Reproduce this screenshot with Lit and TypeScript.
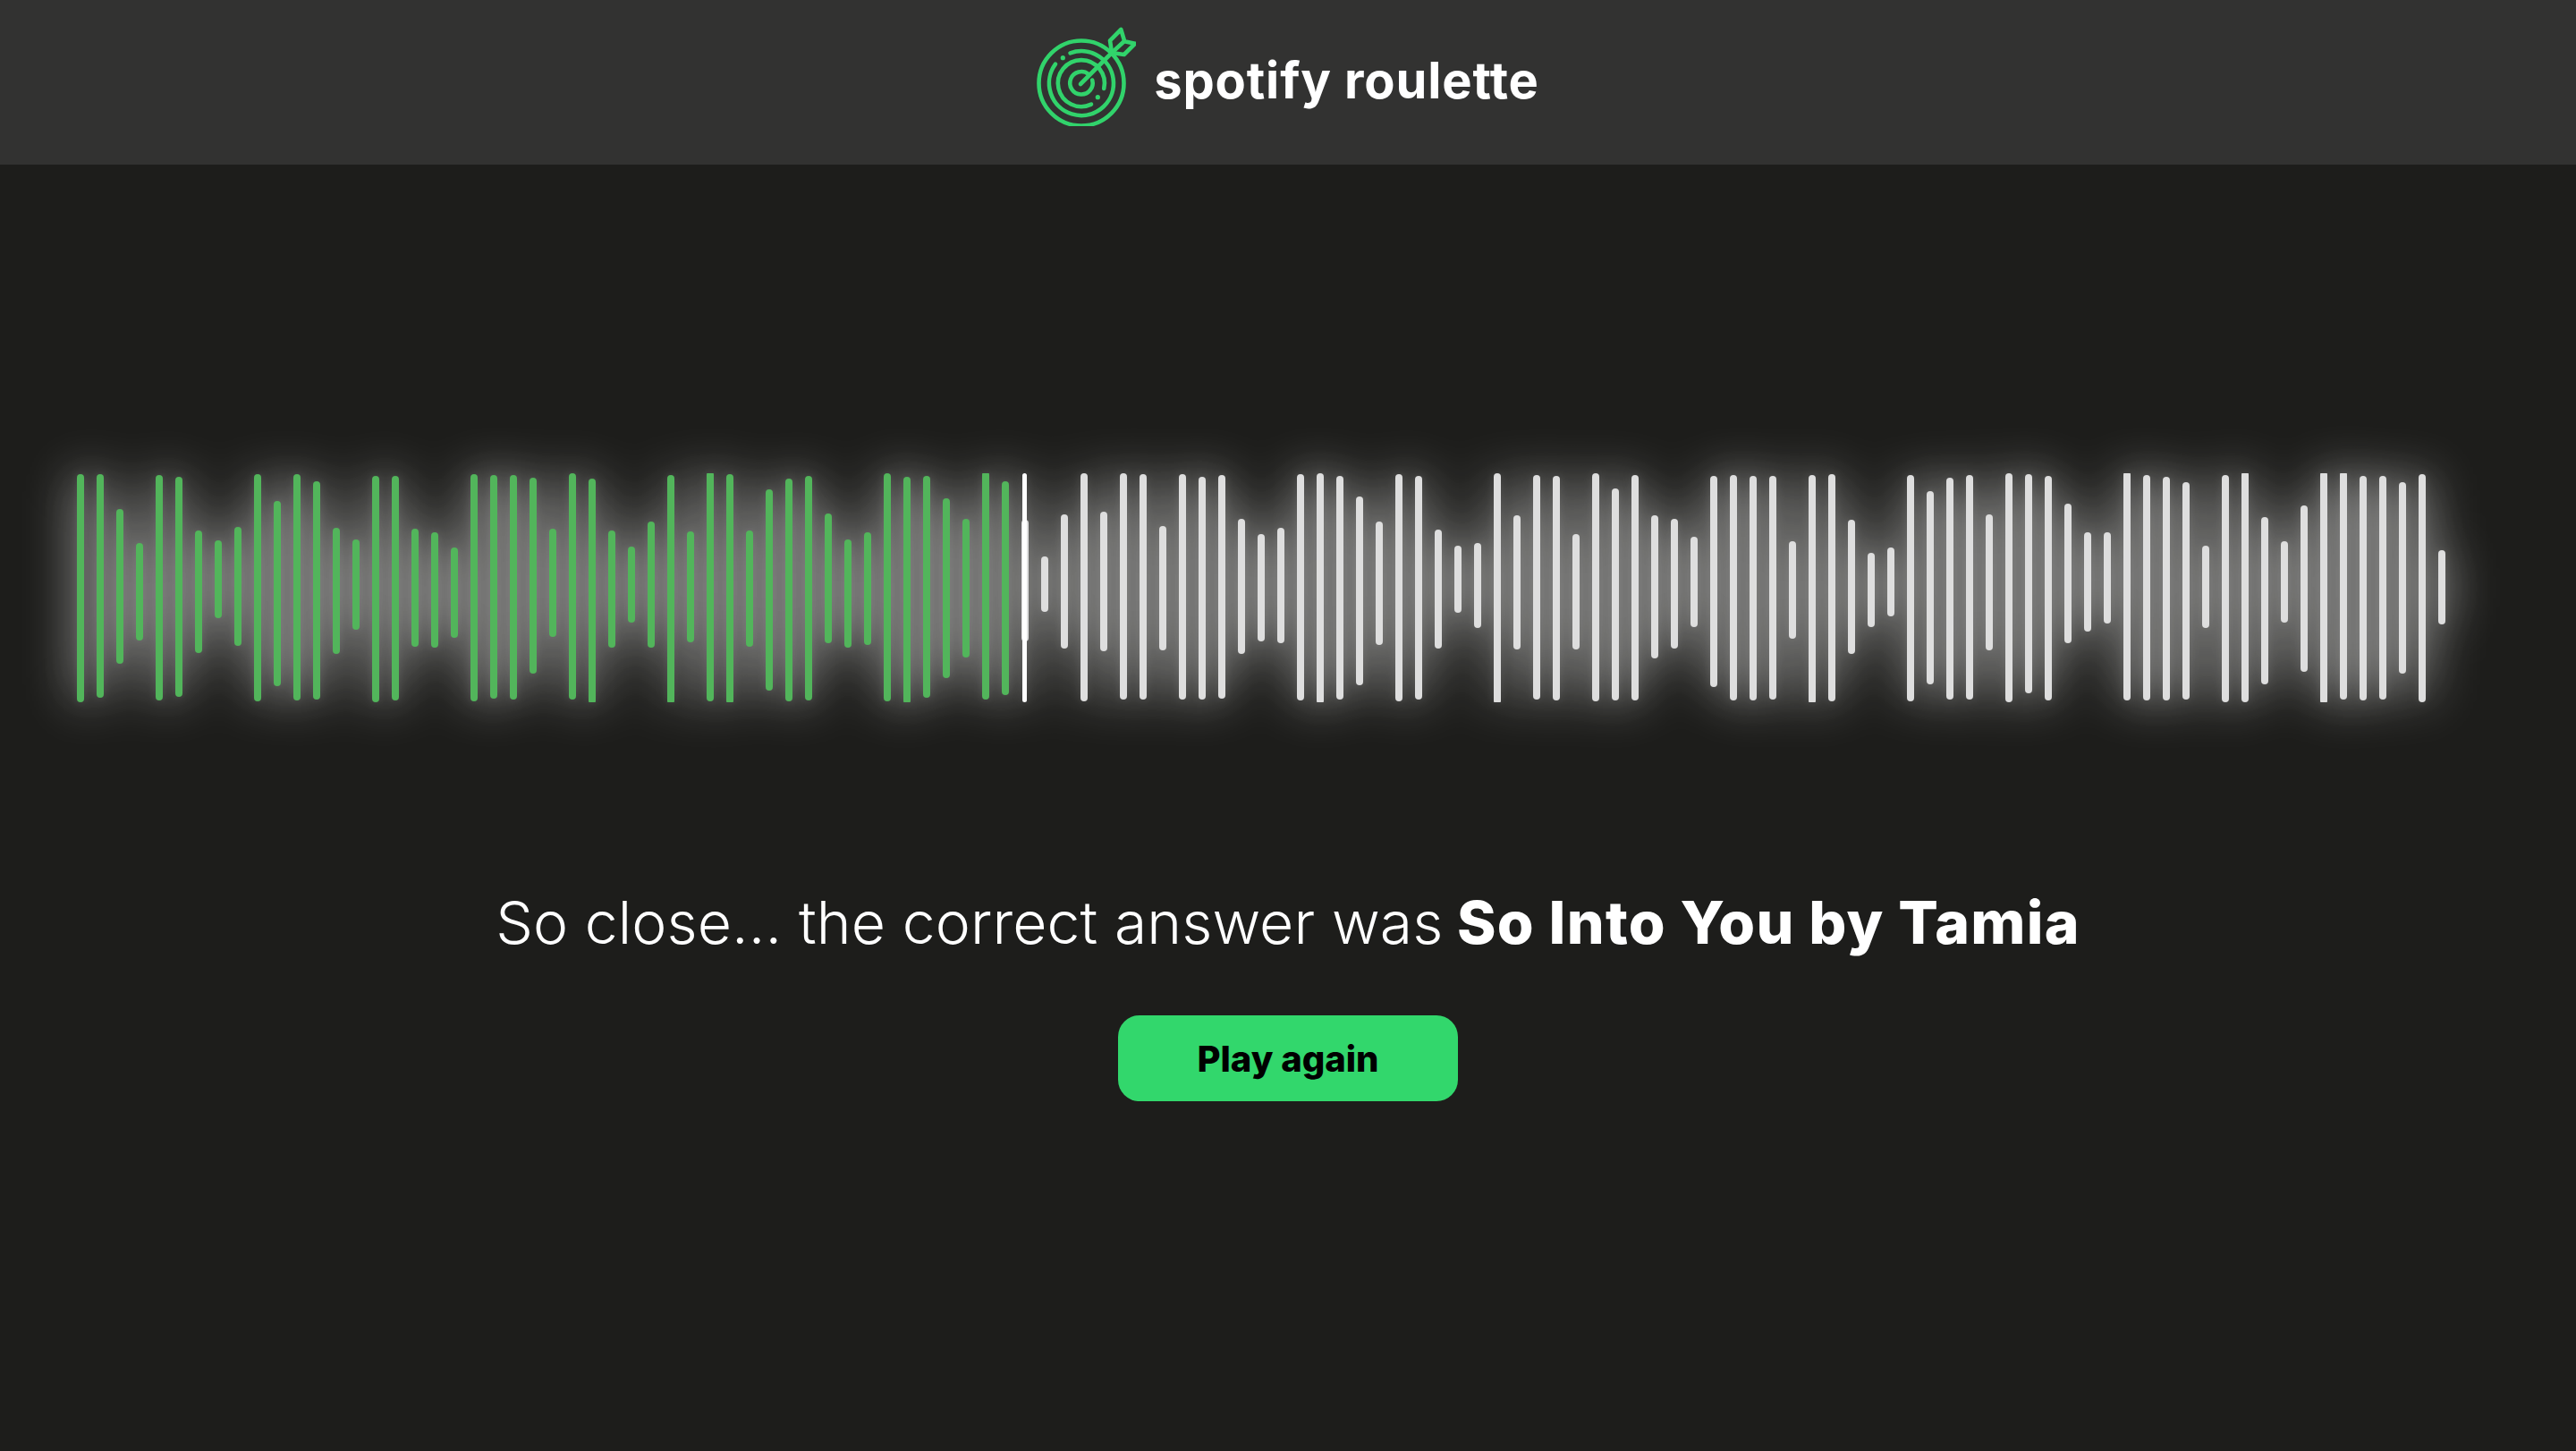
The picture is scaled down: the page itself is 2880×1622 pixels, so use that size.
import { LitElement, html, css, svg } from "lit";
import { customElement } from "lit/decorators.js";

// Each pair is [top, bottom] of a bar in thirds of a pixel; values beyond 87..855 are clipped flat.
const BARS: [number, number][] = [
  [90,855],[90,840],[207,726],[321,648],[93,849],[99,837],[279,690],[312,573],[267,666],[90,852],
  [180,801],[90,849],[114,846],[270,693],[309,612],[96,855],[96,849],[273,669],[285,672],[336,639],
  [90,852],[93,843],[93,846],[102,759],[273,636],[87,846],[105,861],[279,672],[333,588],[249,672],
  [93,861],[282,654],[81,852],[90,861],[279,669],[141,816],[105,852],[96,849],[222,657],[309,672],
  [285,663],[87,852],[99,861],[96,840],[171,774],[240,705],[81,846],[114,831],[243,651],[366,552],
  [225,675],[87,852],[216,684],[87,846],[90,846],[264,681],[90,846],[99,846],[93,843],[240,693],
  [291,651],[270,657],[90,849],[87,861],[96,846],[165,798],[249,663],[90,852],[96,846],[276,675],
  [330,555],[321,606],[87,861],[228,678],[93,846],[96,849],[291,678],[87,852],[138,849],[93,849],
  [228,708],[240,675],[300,603],[96,804],[93,849],[96,849],[96,846],[315,642],[93,861],[90,852],
  [243,693],[354,603],[336,567],[93,852],[147,795],[102,846],[93,846],[225,681],[87,855],[90,825],
  [96,849],[189,657],[285,618],[285,591],[81,849],[93,849],[99,849],[117,846],[330,606],[93,855],
  [81,855],[234,795],[315,588],[195,753],[81,861],[81,846],[96,849],[96,846],[117,759],[90,855],
  [345,594],
];
const PLAYED = 48;

@customElement("app-root")
export class AppRoot extends LitElement {
  static styles = css`
    :host {
      display: block;
      min-height: 100vh;
      background: #1d1d1b;
      font-family: Inter, "Liberation Sans", sans-serif;
      color: #fff;
    }
    .top {
      height: 184px;
      padding-right: 2px;
      box-sizing: border-box;
      background: #323231;
      display: flex;
      align-items: center;
      justify-content: center;
      gap: 20px;
    }
    .logo {
      width: 113px;
      height: 112px;
      margin-top: -14px;
      flex: none;
    }
    .logo * {
      fill: none;
      stroke: #31d36b;
      stroke-width: 4.6;
      stroke-linecap: round;
      stroke-linejoin: round;
    }
    .logo .dot {
      fill: #31d36b;
      stroke: none;
    }
    .brand {
      font-size: 56px;
      font-weight: 700;
      letter-spacing: 0.85px;
      line-height: 1;
      margin-top: -4px;
    }
    .wave-wrap {
      padding: 345px 0 0 86px;
    }
    .wave {
      position: relative;
      width: 2648px;
      height: 256px;
      filter: drop-shadow(0 0 28px #fff) drop-shadow(0 0 5px rgba(255, 255, 255, 0.12));
    }
    .bars {
      display: flex;
      gap: 14px;
      align-items: flex-start;
      height: 256px;
      overflow: hidden;
    }
    .bar {
      flex: none;
      width: 8px;
      border-radius: 4px;
      background: #dedede;
    }
    .bar.played {
      background: #52b55b;
    }
    .playhead {
      position: absolute;
      left: 1057px;
      top: 0;
      width: 5px;
      height: 256px;
      border-radius: 3px;
      background: #fff;
    }
    .answer {
      margin: 208px 0 0;
      text-align: center;
      font-size: 66px;
      line-height: 77px;
      font-weight: 300;
      letter-spacing: 0.1px;
    }
    .answer b {
      font-weight: 800;
      letter-spacing: 1.25px;
      margin-left: -3px;
    }
    .actions {
      display: flex;
      justify-content: center;
      margin-top: 65px;
    }
    .again {
      width: 380px;
      height: 96px;
      border: 0;
      border-radius: 24px;
      background: #32d76c;
      color: #000;
      font: 800 40px Inter, "Liberation Sans", sans-serif;
    }
  `;

  private logo() {
    return svg`
      <svg class="logo" viewBox="-52 -64 113 112" aria-hidden="true">
        <circle cx="0" cy="0" r="47.5"></circle>
        <path d="M -12.5 -33.7 A 36 36 0 1 1 -29 -21.3"></path>
        <circle class="dot" cx="-20.7" cy="-28.3" r="2.6"></circle>
        <path d="M 11 23.6 A 26 26 0 1 1 25.2 6"></path>
        <circle class="dot" cx="18.3" cy="15.7" r="2.6"></circle>
        <path d="M 8 -10 A 12.7 12.7 0 1 0 12.2 -3.5"></path>
        <path d="M -1 1 L 34 -34 L 48 -47"></path>
        <path d="M 34 -34 L 32 -47.7 L 44.3 -60 L 48.3 -46.7 L 60 -44.3 L 47.7 -32 Z"></path>
      </svg>
    `;
  }

  render() {
    return html`
      <header class="top">
        ${this.logo()}
        <div class="brand">spotify roulette</div>
      </header>
      <div class="wave-wrap">
        <div class="wave">
          <div class="bars">
            ${BARS.map(
              ([t, b], i) => html`<div
                class="bar ${i < PLAYED ? "played" : ""}"
                style="margin-top:${(t - 87) / 3}px;height:${(b - t) / 3}px"
              ></div>`
            )}
          </div>
          <div class="playhead"></div>
        </div>
      </div>
      <p class="answer">So close... the correct answer was <b>So Into You by Tamia</b></p>
      <div class="actions"><button class="again">Play again</button></div>
    `;
  }
}
